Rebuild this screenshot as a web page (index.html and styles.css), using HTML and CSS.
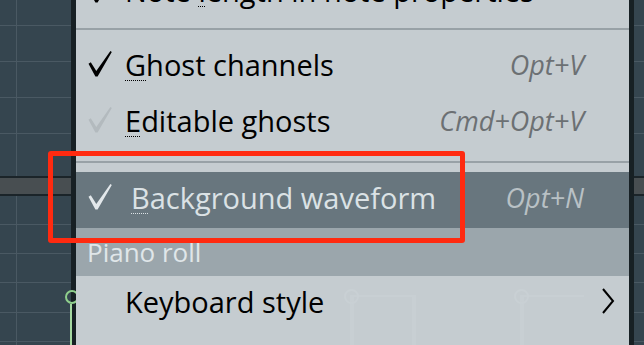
FILE: index.html
```html
<!DOCTYPE html>
<html lang="en">
<head>
    <meta charset="UTF-8">
    <title>Piano roll options</title>
    <link rel="stylesheet" href="styles.css">
</head>
<body>
    <div class="screen">
        <!-- Piano roll behind the menu -->
        <div class="roll roll-left">
            <div class="green-note"></div>
        </div>
        <div class="edge"></div>

        <div class="menu">
            <div class="ghost-note ghost-a"></div>
            <div class="ghost-note ghost-b"></div>

            <div class="item cut">
                <span class="check">
                    <svg viewBox="0 0 24 26" width="24" height="26"><path d="M0.5 12.8 L2.8 11.2 L8.3 20 L22.4 0 L23.8 1 L9.6 25.5 L7.4 25.5 Z"/></svg>
                </span>
                <span class="label">Note <span class="acc">l</span>ength in note properties</span>
            </div>
            <div class="sep"></div>

            <div class="item">
                <span class="check">
                    <svg viewBox="0 0 24 26" width="24" height="26"><path d="M0.5 12.8 L2.8 11.2 L8.3 20 L22.4 0 L23.8 1 L9.6 25.5 L7.4 25.5 Z"/></svg>
                </span>
                <span class="label"><span class="acc">G</span>host channels</span>
                <span class="shortcut">Opt+V</span>
            </div>
            <div class="item dim">
                <span class="check">
                    <svg viewBox="0 0 24 26" width="24" height="26"><path d="M0.5 12.8 L2.8 11.2 L8.3 20 L22.4 0 L23.8 1 L9.6 25.5 L7.4 25.5 Z"/></svg>
                </span>
                <span class="label"><span class="acc">E</span>ditable ghosts</span>
                <span class="shortcut">Cmd+Opt+V</span>
            </div>
            <div class="sep"></div>

            <div class="item active">
                <span class="check">
                    <svg viewBox="0 0 24 26" width="24" height="26"><path d="M0.5 12.8 L2.8 11.2 L8.3 20 L22.4 0 L23.8 1 L9.6 25.5 L7.4 25.5 Z"/></svg>
                </span>
                <span class="label"><span class="acc">B</span>ackground waveform</span>
                <span class="shortcut">Opt+N</span>
            </div>

            <div class="header">Piano roll</div>

            <div class="item">
                <span class="check"></span>
                <span class="label">Keyboard style</span>
                <span class="arrow">
                    <svg viewBox="0 0 14 26" width="14" height="26"><path d="M2 1 L12 13 L2 25" fill="none" stroke="#000" stroke-width="2"/></svg>
                </span>
            </div>
        </div>

        <div class="edge"></div>
        <div class="roll roll-right"></div>

        <!-- Red annotation frame -->
        <div class="mark-box"></div>
    </div>
</body>
</html>
```

FILE: styles.css
```css
body {
    margin: 0;
    background-color: #34444e;
    font-family: 'Open Sans', 'Noto Sans', sans-serif;
    overflow: hidden;
}

.screen {
    position: relative;
    display: flex;
    width: 644px;
    height: 345px;
    overflow: hidden;
}

/* Piano roll grid */
.roll {
    position: relative;
    flex-shrink: 0;
    height: 100%;
    background-color: #35454f;
    background-image:
        linear-gradient(to bottom,
            transparent 176px, #1b2429 176px, #1b2429 178px,
            #484e51 178px, #484e51 194px,
            #1b2429 194px, #1b2429 196px, transparent 196px),
        linear-gradient(to bottom,
            transparent 25px, #4a5963 25px, #4a5963 26px, transparent 26px,
            transparent 61px, #4a5963 61px, #4a5963 62px, transparent 62px,
            transparent 97px, #4a5963 97px, #4a5963 98px, transparent 98px,
            transparent 133px, #4a5963 133px, #4a5963 134px, transparent 134px,
            transparent 224px, #4a5963 224px, #4a5963 225px, transparent 225px,
            transparent 253px, #4a5963 253px, #4a5963 254px, transparent 254px,
            transparent 282px, #4a5963 282px, #4a5963 283px, transparent 283px,
            transparent 312px, #4a5963 312px, #4a5963 313px, transparent 313px,
            transparent 341px, #4a5963 341px, #4a5963 342px, transparent 342px);
}

.roll-left {
    width: 71px;
    background-image:
        linear-gradient(to bottom,
            transparent 176px, #1b2429 176px, #1b2429 178px,
            #484e51 178px, #484e51 194px,
            #1b2429 194px, #1b2429 196px, transparent 196px),
        linear-gradient(to right, transparent 16px, #4a5963 16px, #4a5963 17px, transparent 17px),
        linear-gradient(to bottom,
            transparent 25px, #4a5963 25px, #4a5963 26px, transparent 26px,
            transparent 61px, #4a5963 61px, #4a5963 62px, transparent 62px,
            transparent 97px, #4a5963 97px, #4a5963 98px, transparent 98px,
            transparent 133px, #4a5963 133px, #4a5963 134px, transparent 134px,
            transparent 224px, #4a5963 224px, #4a5963 225px, transparent 225px,
            transparent 253px, #4a5963 253px, #4a5963 254px, transparent 254px,
            transparent 282px, #4a5963 282px, #4a5963 283px, transparent 283px,
            transparent 312px, #4a5963 312px, #4a5963 313px, transparent 313px,
            transparent 341px, #4a5963 341px, #4a5963 342px, transparent 342px);
}

.roll-right {
    width: 10px;
}

.green-note {
    position: absolute;
    left: 65px;
    top: 290px;
    width: 10px;
    height: 10px;
    border: 2px solid #8fcf8c;
    border-radius: 50%;
}

.green-note::after {
    content: '';
    position: absolute;
    left: 3px;
    top: 12px;
    width: 2px;
    height: 60px;
    background-color: #a5d8a1;
}

.edge {
    flex-shrink: 0;
    width: 5px;
    height: 100%;
    background-color: #172024;
}

/* Context menu */
.menu {
    position: relative;
    flex-shrink: 0;
    width: 553px;
    height: 100%;
    background-color: #c5ccd0;
    color: #000;
}

.item {
    position: relative;
    display: flex;
    align-items: center;
    height: 56px;
    padding-bottom: 6px;
    box-sizing: border-box;
    font-size: 29px;
}

.item.cut {
    margin-top: -38px;
    padding-bottom: 0;
}

.check {
    width: 49px;
    flex-shrink: 0;
    display: flex;
    padding-left: 12px;
    box-sizing: border-box;
}

.check svg {
    fill: #000;
}

.item.dim .check svg {
    fill: #b3babe;
}

.label {
    flex: 1;
    white-space: nowrap;
}

.acc {
    text-decoration: underline dotted;
    text-decoration-thickness: 1px;
    text-underline-offset: 4px;
}

.shortcut {
    padding-right: 45px;
    font-size: 27px;
    font-style: italic;
    color: #6c7073;
}

.arrow {
    display: flex;
    padding-right: 14px;
}

.sep {
    height: 21px;
    background: linear-gradient(to bottom, transparent 10px, #98a1a6 10px, #98a1a6 12px, transparent 12px);
}

.item.active {
    background-color: #68767e;
    color: #dbe2e5;
}

.item.active .check svg {
    fill: #e3e8eb;
}

.item.active .label {
    padding-left: 6px;
}

.item.active .shortcut {
    color: #b9c1c5;
}

.header {
    height: 48px;
    display: flex;
    align-items: center;
    padding-left: 11px;
    background-color: #9ba6ac;
    color: #e0e6e9;
    font-size: 26px;
}

/* Notes showing through the translucent menu */
.ghost-note {
    position: absolute;
    top: 295px;
    height: 60px;
    border-left: 4px solid #c8cfd3;
    border-top: 2px solid #c8cfd3;
}

.ghost-note::before {
    content: '';
    position: absolute;
    left: -10px;
    top: -8px;
    width: 11px;
    height: 11px;
    border: 2px solid #c9d0d4;
    border-radius: 50%;
}

.ghost-a {
    left: 274px;
    width: 58px;
    border-right: 4px solid #c8cfd3;
}

.ghost-b {
    left: 444px;
    width: 60px;
}

/* Annotation */
.mark-box {
    position: absolute;
    left: 48px;
    top: 151px;
    width: 417px;
    height: 92px;
    box-sizing: border-box;
    border: 5px solid #ff2a10;
    border-radius: 3px;
}
```
